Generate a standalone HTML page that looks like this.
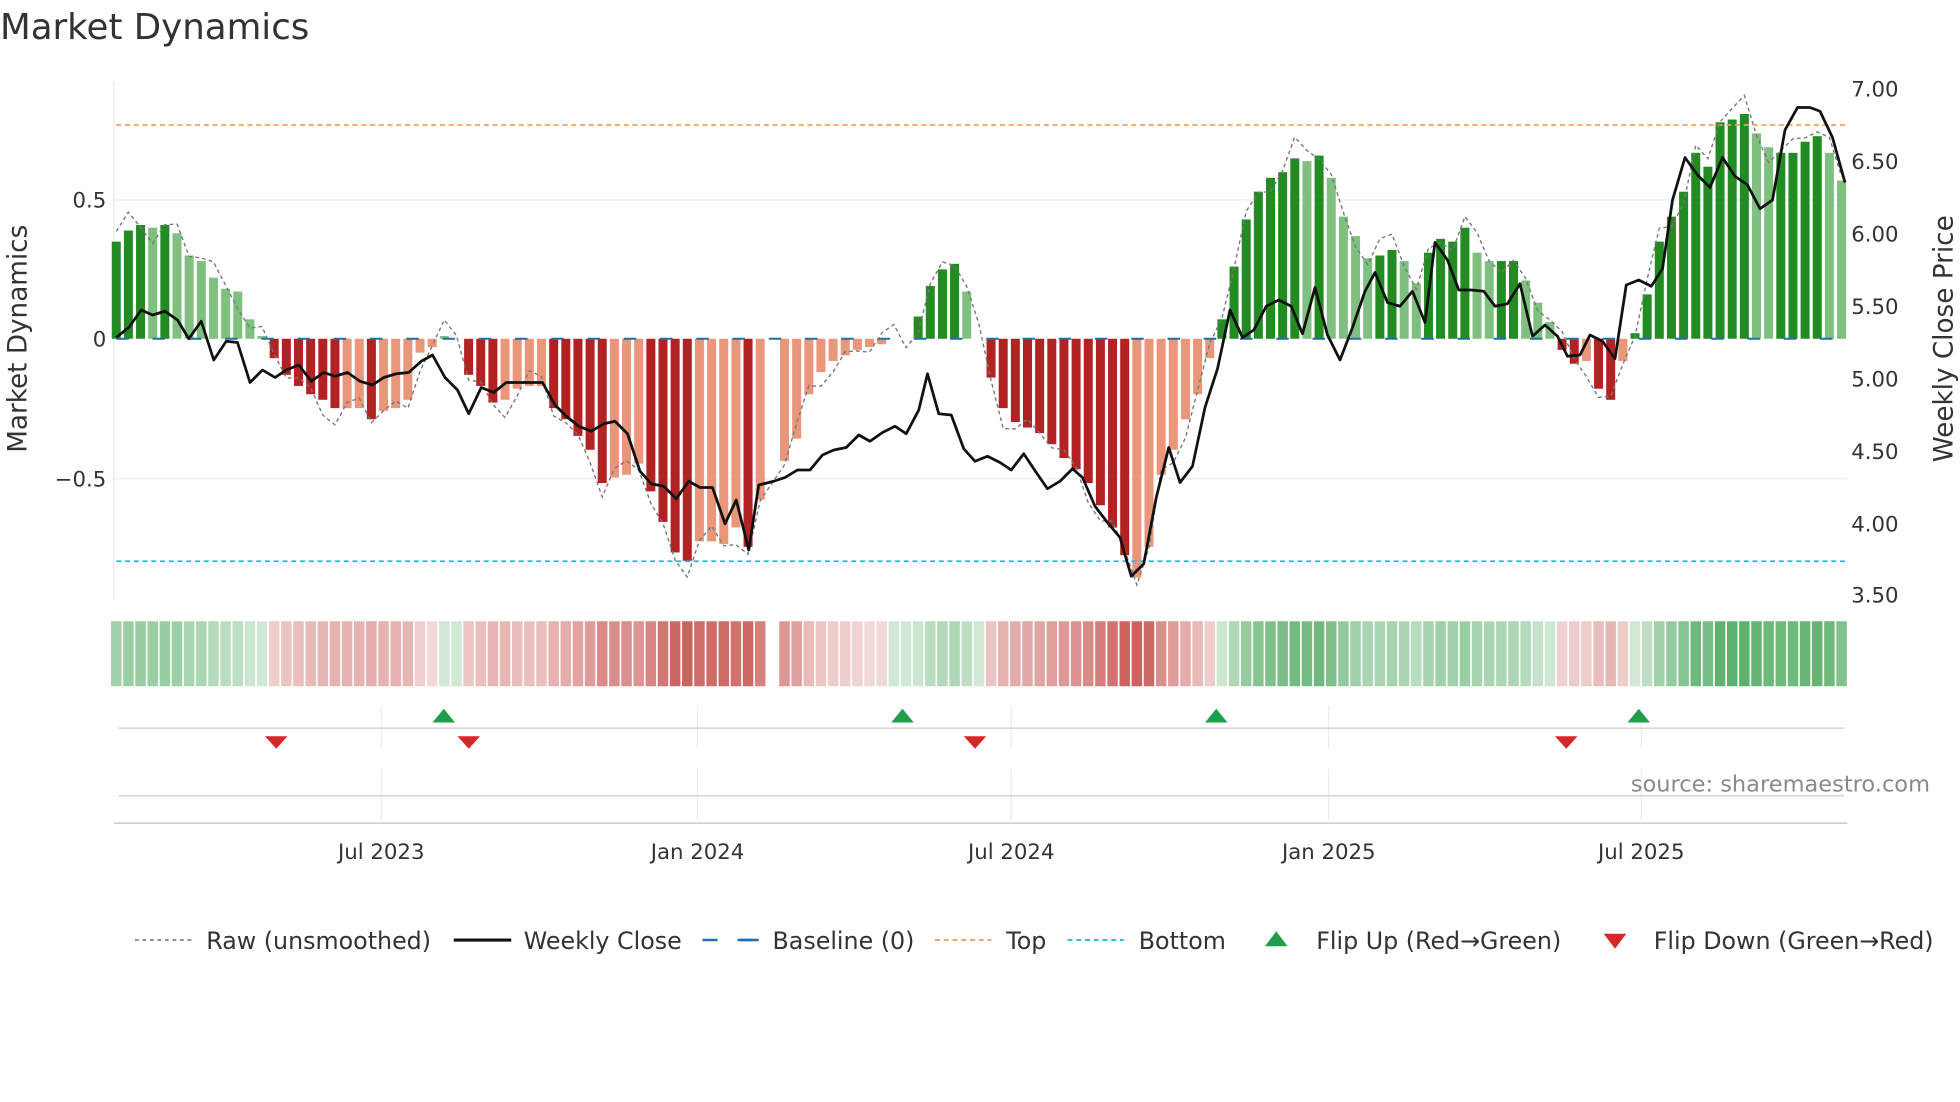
<!DOCTYPE html>
<html><head><meta charset="utf-8"><style>
html,body{margin:0;padding:0;background:#fff;}
svg{display:block;font-family:"DejaVu Sans","Liberation Sans",sans-serif;}
</style></head><body>
<svg id="s" width="1960" height="1102" viewBox="0 0 1568 881.6" xmlns="http://www.w3.org/2000/svg">
<rect width="1568" height="882" fill="#fff"/>
<text x="0" y="31" font-size="28.5" fill="#333">Market Dynamics</text>
<line x1="91" y1="65" x2="91" y2="480" stroke="#e6e6ee" stroke-width="1"/>
<line x1="91" y1="160" x2="1478" y2="160" stroke="#ececf2" stroke-width="1"/>
<line x1="91" y1="383" x2="1478" y2="383" stroke="#ececf2" stroke-width="1"/>
<g id="bars"></g>
<line x1="93" y1="100" x2="1476" y2="100" stroke="#f0a060" stroke-width="1.4" stroke-dasharray="4,3"/>
<line x1="93" y1="449" x2="1476" y2="449" stroke="#22bcd8" stroke-width="1.4" stroke-dasharray="4,3"/>
<line x1="93" y1="271" x2="1476" y2="271" stroke="#1f6fa8" stroke-width="1.6" stroke-dasharray="10,19"/>
<g id="lines"></g>
<g font-size="17" fill="#333">
<text x="85" y="166" text-anchor="end">0.5</text>
<text x="85" y="277" text-anchor="end">0</text>
<text x="85" y="389" text-anchor="end">−0.5</text>
<text x="1481" y="77">7.00</text>
<text x="1481" y="135">6.50</text>
<text x="1481" y="193">6.00</text>
<text x="1481" y="251">5.50</text>
<text x="1481" y="309">5.00</text>
<text x="1481" y="367">4.50</text>
<text x="1481" y="425">4.00</text>
<text x="1481" y="482">3.50</text>
</g>
<text transform="translate(21,271) rotate(-90)" font-size="21" fill="#333" text-anchor="middle">Market Dynamics</text>
<text transform="translate(1562,271) rotate(-90)" font-size="21" fill="#333" text-anchor="middle">Weekly Close Price</text>
<g id="heat"></g>
<g stroke="#ececec" stroke-width="1">
<line x1="305" y1="565" x2="305" y2="598"/><line x1="558" y1="565" x2="558" y2="598"/><line x1="809" y1="565" x2="809" y2="598"/><line x1="1063" y1="565" x2="1063" y2="598"/><line x1="1313" y1="565" x2="1313" y2="598"/>
<line x1="305" y1="615" x2="305" y2="656"/><line x1="558" y1="615" x2="558" y2="656"/><line x1="809" y1="615" x2="809" y2="656"/><line x1="1063" y1="615" x2="1063" y2="656"/><line x1="1313" y1="615" x2="1313" y2="656"/>
</g>
<line x1="95" y1="582.5" x2="1475" y2="582.5" stroke="#d6d6d6" stroke-width="1.3"/>
<line x1="95" y1="636.5" x2="1475" y2="636.5" stroke="#d6d6d6" stroke-width="1.3"/>
<line x1="91" y1="658.5" x2="1478" y2="658.5" stroke="#cfcfcf" stroke-width="1.3"/>
<g fill="#1e9e4a">
<polygon points="346,578 364,578 355,567"/><polygon points="713,578 731,578 722,567"/><polygon points="964,578 982,578 973,567"/><polygon points="1302,578 1320,578 1311,567"/>
</g>
<g fill="#d62728">
<polygon points="212,589 230,589 221,599"/><polygon points="366,589 384,589 375,599"/><polygon points="771,589 789,589 780,599"/><polygon points="1244,589 1262,589 1253,599"/>
</g>
<text x="1544" y="633" font-size="18" fill="#8a8a8a" text-anchor="end">source: sharemaestro.com</text>
<g font-size="17" fill="#333" text-anchor="middle">
<text x="305" y="687">Jul 2023</text><text x="558" y="687">Jan 2024</text><text x="809" y="687">Jul 2024</text><text x="1063" y="687">Jan 2025</text><text x="1313" y="687">Jul 2025</text>
</g>
<g font-size="19" fill="#333">
<line x1="108" y1="752" x2="153" y2="752" stroke="#777" stroke-width="1.3" stroke-dasharray="3,3"/>
<text x="165" y="759">Raw (unsmoothed)</text>
<line x1="363" y1="752" x2="409" y2="752" stroke="#111" stroke-width="2.5"/>
<text x="419" y="759">Weekly Close</text>
<line x1="562" y1="752" x2="607" y2="752" stroke="#1f6fa8" stroke-width="2" stroke-dasharray="12,16"/>
<line x1="592" y1="752" x2="607" y2="752" stroke="#1f6fa8" stroke-width="2"/>
<text x="618" y="759">Baseline (0)</text>
<line x1="748" y1="752" x2="793" y2="752" stroke="#f0a060" stroke-width="1.5" stroke-dasharray="4,3"/>
<text x="805" y="759">Top</text>
<line x1="854" y1="752" x2="899" y2="752" stroke="#22bcd8" stroke-width="1.5" stroke-dasharray="4,3"/>
<text x="911" y="759">Bottom</text>
<polygon points="1012,757 1030,757 1021,745" fill="#1e9e4a"/>
<text x="1053" y="759">Flip Up (Red→Green)</text>
<polygon points="1283,747 1301,747 1292,759" fill="#d62728"/>
<text x="1323" y="759">Flip Down (Green→Red)</text>
</g>
</svg>
<script>
var V=[[.35,1],[.39,1],[.41,1],[.40,0],[.41,1],[.38,0],[.30,0],[.28,0],[.22,0],[.18,0],[.17,0],[.07,0],[.01,0],[-.07,1],[-.13,1],[-.17,1],[-.20,1],[-.22,1],[-.25,1],[-.25,0],[-.25,0],[-.29,1],[-.26,0],[-.25,0],[-.22,0],[-.05,0],[-.03,0],[.01,0],[0,0],[-.13,1],[-.17,1],[-.23,1],[-.22,0],[-.18,0],[-.17,0],[-.17,0],[-.25,1],[-.29,1],[-.35,1],[-.40,1],[-.52,1],[-.50,0],[-.49,0],[-.45,0],[-.55,1],[-.66,1],[-.77,1],[-.80,1],[-.73,0],[-.73,0],[-.74,0],[-.68,0],[-.75,1],[-.58,0],[null,0],[-.44,0],[-.36,0],[-.20,0],[-.12,0],[-.08,0],[-.06,0],[-.04,0],[-.03,0],[-.02,0],[0,0],[0,0],[.08,1],[.19,1],[.25,1],[.27,1],[.17,0],[0,0],[-.14,1],[-.25,1],[-.30,1],[-.32,1],[-.34,1],[-.38,1],[-.43,1],[-.47,1],[-.52,1],[-.60,1],[-.68,1],[-.78,1],[-.86,0],[-.75,0],[-.49,0],[-.40,0],[-.29,0],[-.20,0],[-.07,0],[.07,1],[.26,1],[.43,1],[.53,1],[.58,1],[.60,1],[.65,1],[.64,0],[.66,1],[.58,0],[.44,0],[.37,0],[.29,0],[.30,1],[.32,1],[.28,0],[.20,0],[.31,1],[.36,1],[.35,1],[.40,1],[.31,0],[.28,0],[.28,1],[.28,1],[.21,0],[.13,0],[.06,0],[-.04,1],[-.09,1],[-.08,0],[-.18,1],[-.22,1],[-.08,0],[.02,1],[.16,1],[.35,1],[.44,1],[.53,1],[.67,1],[.62,1],[.78,1],[.79,1],[.81,1],[.74,0],[.69,0],[.67,1],[.67,1],[.71,1],[.73,1],[.67,0],[.57,0]];
var NS="http://www.w3.org/2000/svg";
function el(t,a,p){var e=document.createElementNS(NS,t);for(var k in a)e.setAttribute(k,a[k]);document.getElementById(p).appendChild(e);return e;}
var dx=9.72,y0=271,sc=222,raw=[];
V.forEach(function(d,i){var x=93+i*dx,v=d[0];
 if(v===null){raw.push(null);return;}
 var c=v>=0?(d[1]?"#228b22":"#7fbf7f"):(d[1]?"#b22222":"#e9967a");
 var h=Math.abs(v)*sc;
 if(h>0.5)el("rect",{x:x-3.6,y:v>=0?y0-h:y0,width:7.2,height:h,fill:c},"bars");
 var a=Math.min(1,0.25+Math.abs(v)*0.95);
 var hc=v>=0?"rgba(40,150,60,"+(a*0.75)+")":"rgba(190,60,55,"+(a*0.8)+")";
 if(Math.abs(v)<0.04) hc=v>=0?"rgba(40,150,60,0.22)":"rgba(190,60,55,0.2)";
 el("rect",{x:x-4.2,y:497,width:8.4,height:52,fill:hc},"heat");
 var n=Math.sin(i*1.7)*0.04+Math.cos(i*0.9)*0.03;
 raw.push([x,y0-(v*1.02+n)*sc]);
});
var rp=raw.filter(function(p){return p}).map(function(p){return p[0].toFixed(1)+","+p[1].toFixed(1)}).join(" ");
el("polyline",{points:rp,fill:"none",stroke:"#777","stroke-width":1.1,"stroke-dasharray":"3,2.5"},"lines");
var P="93,270 103,262 113,248 122,252 132,249 142,256 151,271 161,257 171,288 181,273 190,274 200,306 210,296 220,302 229,296 239,292 249,305 259,298 268,301 278,298 288,305 298,308 307,302 317,299 327,298 337,289 346,284 356,302 366,312 375,331 385,310 395,314 405,306 414,306 424,306 434,306 444,324 453,333 463,341 473,345 483,339 492,337 502,347 512,377 521,387 531,389 541,399 551,385 560,390 570,390 580,419 589,400 599,440 607,388 619,385 628,382 638,376 648,376 658,364 667,360 677,358 687,348 696,353 706,346 716,341 725,347 735,328 742,299 751,331 761,332 771,359 780,369 790,365 800,370 809,376 819,363 829,378 838,391 848,385 858,375 866,382 876,405 886,418 896,430 905,461 915,451 925,398 935,358 944,386 954,373 964,326 974,295 984,248 994,270 1003,264 1013,245 1023,240 1033,245 1042,267 1052,230 1062,268 1072,288 1082,262 1092,233 1100,218 1110,242 1120,245 1130,233 1140,258 1148,194 1158,208 1167,232 1177,232 1187,233 1196,245 1206,243 1216,227 1226,269 1236,260 1246,269 1254,285 1264,284 1272,268 1282,273 1292,287 1301,228 1311,224 1321,229 1330,215 1338,160 1348,126 1358,140 1368,150 1378,126 1388,141 1398,148 1408,167 1418,160 1428,104 1438,86 1448,86 1456,89 1466,110 1476,146";
el("polyline",{points:P,fill:"none",stroke:"#111","stroke-width":2.2,"stroke-linejoin":"round"},"lines");
</script>
</body></html>
